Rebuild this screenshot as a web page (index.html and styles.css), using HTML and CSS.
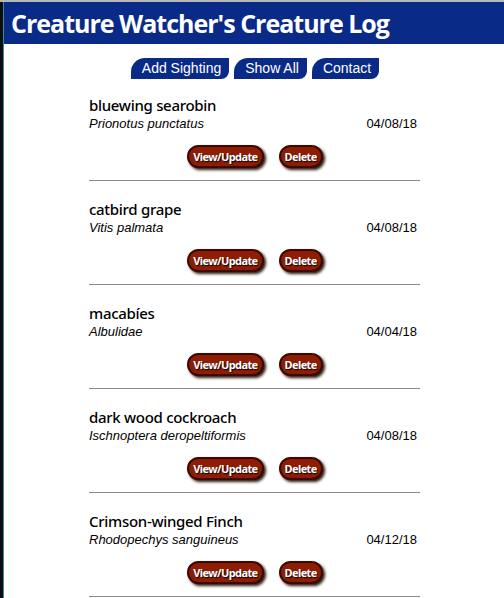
FILE: index.html
```html
<!DOCTYPE html>
<html>
<head>
<meta charset="utf-8">
<link rel="stylesheet" href="styles.css">
</head>
<body>
<div class="frame">
  <header class="masthead">
    <h1 class="title">Creature Watcher's Creature Log</h1>
  </header>
  <nav class="nav">
    <a class="nav-btn">Add Sighting</a>
    <a class="nav-btn">Show All</a>
    <a class="nav-btn">Contact</a>
  </nav>
  <main class="log">
    <section class="entry">
      <div class="name">bluewing searobin</div>
      <div class="meta"><span class="sci">Prionotus punctatus</span><span class="date">04/08/18</span></div>
      <div class="actions"><button class="act">View/Update</button><button class="act">Delete</button></div>
    </section>
    <section class="entry">
      <div class="name">catbird grape</div>
      <div class="meta"><span class="sci">Vitis palmata</span><span class="date">04/08/18</span></div>
      <div class="actions"><button class="act">View/Update</button><button class="act">Delete</button></div>
    </section>
    <section class="entry">
      <div class="name">macabíes</div>
      <div class="meta"><span class="sci">Albulidae</span><span class="date">04/04/18</span></div>
      <div class="actions"><button class="act">View/Update</button><button class="act">Delete</button></div>
    </section>
    <section class="entry">
      <div class="name">dark wood cockroach</div>
      <div class="meta"><span class="sci">Ischnoptera deropeltiformis</span><span class="date">04/08/18</span></div>
      <div class="actions"><button class="act">View/Update</button><button class="act">Delete</button></div>
    </section>
    <section class="entry">
      <div class="name">Crimson-winged Finch</div>
      <div class="meta"><span class="sci">Rhodopechys sanguineus</span><span class="date">04/12/18</span></div>
      <div class="actions"><button class="act">View/Update</button><button class="act">Delete</button></div>
    </section>
  </main>
</div>
</body>
</html>
```
FILE: styles.css
```css
html, body {
  margin: 0;
  padding: 0;
  background: #fff;
  height: 100%;
  overflow: hidden;
}
body {
  border-top: 2px solid #b8b8b8;
  box-sizing: border-box;
}
.frame {
  border-left: 3px solid #0b0d0f;
  box-shadow: inset 1px 0 0 #2f8f9c;
  min-height: 100%;
  box-sizing: border-box;
}
.masthead {
  margin-left: 1px;
  background: #0a2a88;
  height: 42px;
  display: flex;
  align-items: center;
  padding-left: 7px;
}
.title {
  margin: 0;
  color: #fff;
  font-family: "Open Sans", "DejaVu Sans", sans-serif;
  font-weight: 700;
  font-size: 25px;
  letter-spacing: -1px;
  line-height: 1;
}
.nav {
  display: flex;
  justify-content: center;
  gap: 5px;
  margin-top: 14px;
  padding-left: 3px;
}
.nav-btn {
  background: #0a2a88;
  color: #fff;
  font-family: "Liberation Sans", Arial, sans-serif;
  font-size: 14px;
  line-height: 21px;
  padding: 0 8px 0 11px;
  border-radius: 14px 0 8px 0;
}
.log {
  width: 331px;
  padding-left: 2px;
  margin: 0 auto;
}
.entry {
  border-bottom: 1px solid #8a8a8a;
  padding-top: 19px;
  padding-bottom: 12px;
}
.entry:first-child {
  padding-top: 17px;
}
.name {
  font-family: "Noto Sans", "Open Sans", sans-serif;
  font-weight: 500;
  font-size: 15px;
  letter-spacing: -0.3px;
  line-height: 19px;
  color: #000;
}
.meta {
  display: flex;
  justify-content: space-between;
  font-family: "Liberation Sans", Arial, sans-serif;
  font-size: 13px;
  line-height: 17px;
  padding-right: 3px;
}
.sci { font-style: italic; }
.actions {
  display: flex;
  justify-content: center;
  gap: 15px;
  margin-top: 13px;
  padding-left: 1px;
}
.act {
  background: #8f1d04;
  color: #fff;
  border: 2px solid #3a0a00;
  border-radius: 12px;
  font-family: "Noto Sans", "Open Sans", sans-serif;
  font-weight: 700;
  font-size: 11px;
  letter-spacing: -0.6px;
  height: 23px;
  padding: 0 4px;
  box-shadow: 2px 2px 3px #2a1a10;
  text-shadow: 1px 1px 1px #000;
}
```
